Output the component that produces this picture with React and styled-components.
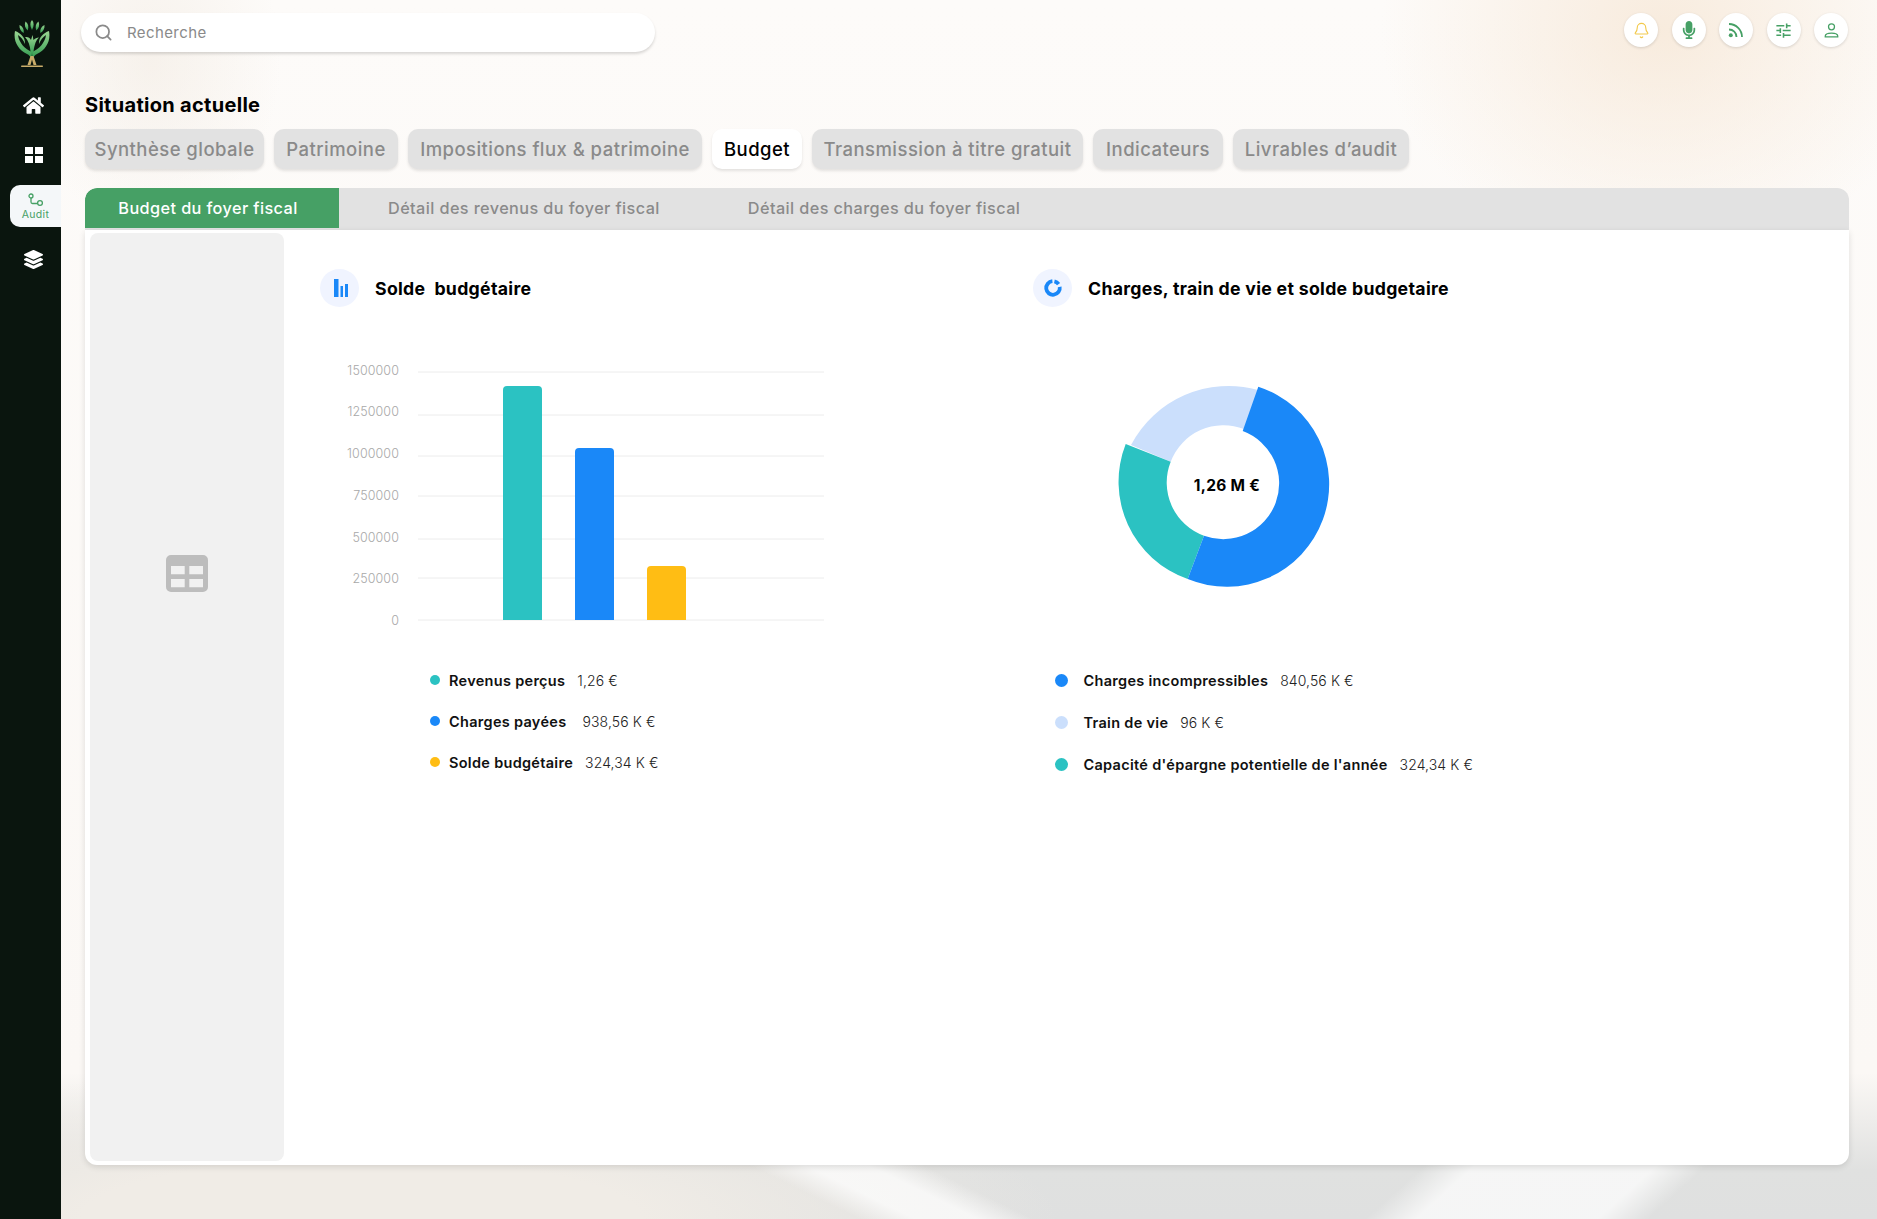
import React from 'react'
import styled, { createGlobalStyle } from 'styled-components'
import { Bell, Search } from 'lucide-react'
import { FaHome, FaLayerGroup, FaMicrophone } from 'react-icons/fa'
import { MdTune } from 'react-icons/md'

const GlobalStyle = createGlobalStyle`
  html, body {
    margin: 0;
    padding: 0;
    font-family: Inter, "Noto Sans", sans-serif;
  }
  * { box-sizing: border-box; }
`

const topTabs = [
  { label: 'Synthèse globale', width: 179 },
  { label: 'Patrimoine', width: 124 },
  { label: 'Impositions flux & patrimoine', width: 294 },
  { label: 'Budget', width: 90, active: true },
  { label: 'Transmission à titre gratuit', width: 271 },
  { label: 'Indicateurs', width: 130 },
  { label: 'Livrables d’audit', width: 176 },
]

const yTicks = [
  { label: '1500000', y: 12, labelY: 15.2 },
  { label: '1250000', y: 55, labelY: 56.2 },
  { label: '1000000', y: 96, labelY: 98.2 },
  { label: '750000', y: 136, labelY: 140.2 },
  { label: '500000', y: 179, labelY: 182.2 },
  { label: '250000', y: 218, labelY: 222.5 },
  { label: '0', y: 260, labelY: 264.5 },
]

const bars = [
  { x: 183, top: 26, color: '#2bc2c2' },
  { x: 255, top: 88, color: '#1a88f8' },
  { x: 327, top: 206, color: '#ffbd14' },
]

const barLegend = [
  { color: '#2bc2c2', name: 'Revenus perçus', value: '1,26 €' },
  { color: '#1a88f8', name: 'Charges payées', value: '\u00a0938,56 K €' },
  { color: '#ffbd14', name: 'Solde budgétaire', value: '324,34 K €' },
]

const donutLegend = [
  { color: '#1a88f8', name: 'Charges incompressibles', value: '840,56 K €' },
  { color: '#cbdffc', name: 'Train de vie', value: '96 K €' },
  { color: '#2bc2c2', name: "Capacité d'épargne potentielle de l'année", value: '324,34 K €' },
]

const Logo = () => (
  <svg width="36" height="48" viewBox="0 0 36 48">
    <defs>
      <linearGradient id="leaf" x1="0" y1="0" x2="0" y2="1">
        <stop offset="0" stopColor="#9ad592" />
        <stop offset="1" stopColor="#2f9a4f" />
      </linearGradient>
    </defs>
    <g fill="url(#leaf)">
      <path d="M1 11C-1 21 4 30 13 34c2 1 3.500 2.500 4.500 5l.5-7C11 29 5 23 4 15c3 2 5.500 5 7 9 .5-6-4-11-10-13z" />
      <path d="M35 11c2 10-3 19-12 23-2 1-3.500 2.500-4.500 5l-.5-7c7-3 13-9 14-17-3 2-5.500 5-7 9-.5-6 4-11 10-13z" />
      <path d="M18 0c2.200 2.500 2.200 6 0 10-2.200-4-2.200-7.500 0-10z" />
      <path d="M11.500 1.500c2.800 2 3.500 5 2.200 9-2.800-2.500-3.500-5.500-2.200-9z" />
      <path d="M24.500 1.500c-2.800 2-3.500 5-2.200 9 2.800-2.500 3.500-5.500 2.200-9z" />
      <path d="M5.500 5c3 1.200 4.600 4 4.300 8-3-1.500-4.600-4.200-4.300-8z" />
      <path d="M30.500 5c-3 1.200-4.600 4-4.300 8 3-1.500 4.600-4.200 4.300-8z" />
      <path d="M11 17c2.500-.5 5 .5 6 3l1.500-5 1 5c1.500-1.500 3.300-2.500 5.500-2.500-3 2.500-4.500 7-5.500 14l-1.500 4-1.500-4c-.5-6-2-10.500-5.500-14.500z" />
    </g>
    <path d="M16.500 36 13.500 45h3L18 39.500 19.500 45h3l-3-9z" fill="#c9ad6a" />
    <rect x="7" y="45.500" width="22" height="1.500" rx=".7" fill="#c9ad6a" />
  </svg>
)

const GridIcon = () => (
  <svg width="18" height="16" viewBox="0 0 18 16" fill="#fff">
    <rect x="0" y="0" width="8" height="7" />
    <rect x="10" y="0" width="8" height="7" />
    <rect x="0" y="9" width="8" height="7" />
    <rect x="10" y="9" width="8" height="7" />
  </svg>
)

const AuditIcon = () => (
  <svg width="16" height="15" viewBox="0 0 16 15" fill="none" stroke="#46a065" strokeWidth="1.3">
    <circle cx="3" cy="3" r="2" />
    <circle cx="12" cy="10" r="2.4" />
    <path d="M3 5v4c0 1 .6 1.500 1.500 1.500H9.500" />
  </svg>
)

const RssIcon = () => (
  <svg width="16" height="16" viewBox="0 0 16 16" fill="none" stroke="#46a065" strokeWidth="1.8">
    <path d="M1 2a13 13 0 0 1 13 13" />
    <path d="M1 7.500a7.500 7.500 0 0 1 7.500 7.500" />
    <circle cx="2.800" cy="13.200" r="2" fill="#46a065" stroke="none" />
  </svg>
)

const UserIcon = () => (
  <svg width="15" height="15" viewBox="0 0 18 18" fill="none" stroke="#46a065" strokeWidth="1.5">
    <circle cx="9" cy="4.500" r="3.600" />
    <path d="M1.500 16.500v-.8c0-2.200 3.400-3.700 7.500-3.700s7.500 1.500 7.500 3.700v.8z" />
  </svg>
)

const TableIcon = () => (
  <svg width="42" height="37" viewBox="0 0 42 37">
    <path
      fillRule="evenodd"
      fill="#bdbdbd"
      d="M5 0h32a5 5 0 0 1 5 5v27a5 5 0 0 1-5 5H5a5 5 0 0 1-5-5V5a5 5 0 0 1 5-5zM5 11v8.300h13.700V11zM23.300 11v8.300H37V11zM5 24v8.300h13.700V24zM23.300 24v8.300H37V24z"
    />
  </svg>
)

const BarsIcon = () => (
  <svg width="18" height="18" viewBox="-3 0 18 18" fill="#1a88f8">
    <rect x="0" y="0" width="4.500" height="18" />
    <rect x="6.500" y="7" width="2.500" height="11" />
    <rect x="11" y="5" width="3" height="13" />
  </svg>
)

const RingIcon = () => (
  <svg width="20" height="20" viewBox="0 0 20 20" fill="none" stroke="#1a88f8" strokeWidth="3.8">
    <path d="M16.700 8.800A6.800 6.800 0 1 1 9.400 3.200" />
    <path d="M11.400 3.350A6.800 6.800 0 0 1 15.600 6.100" />
  </svg>
)

const BarChart = () => (
  <ChartSvg width="510" height="275" viewBox="0 0 510 275">
    {yTicks.map((tick) => (
      <g key={tick.label}>
        <TickLine x1="98" x2="504" y1={tick.y} y2={tick.y} />
        <TickLabel x="79" y={tick.labelY}>{tick.label}</TickLabel>
      </g>
    ))}
    {bars.map((bar) => (
      <path
        key={bar.x}
        fill={bar.color}
        d={`M${bar.x} 260V${bar.top + 4}a4 4 0 0 1 4-4h31a4 4 0 0 1 4 4V260z`}
      />
    ))}
  </ChartSvg>
)

const DonutChart = () => (
  <ChartSvg width="260" height="240" viewBox="0 0 260 240">
    <path
      fill="#cbdffc"
      d="M41 85A110 110 0 0 1 168 30L154 69A56.500 56.500 0 0 0 80.700 101.700z"
    />
    <path
      fill="#2bc2c2"
      d="M97.700 219A103 103 0 0 1 35.700 84L80.700 101.700A56.500 56.500 0 0 0 114 175.700z"
    />
    <path
      fill="#1a88f8"
      d="M168.300 26.700A102.500 102.500 0 1 1 97.700 219L114 175.700A50 50 0 0 0 152.700 71z"
    />
    <DonutLabel x="137" y="131">1,26 M €</DonutLabel>
  </ChartSvg>
)

const Legend = ({ items, variant }) => (
  <LegendList $variant={variant}>
    {items.map((item) => (
      <LegendRow key={item.name} $variant={variant}>
        <LegendDot $color={item.color} $variant={variant} />
        <LegendName>{item.name}</LegendName>
        <LegendValue>{item.value}</LegendValue>
      </LegendRow>
    ))}
  </LegendList>
)

const App = () => {
  return (
    <>
      <GlobalStyle />
      <Page>
        <Sidebar>
          <LogoSlot><Logo /></LogoSlot>
          <NavButton><FaHome size={21} color="#fff" /></NavButton>
          <NavButton><GridIcon /></NavButton>
          <AuditItem>
            <AuditIcon />
            <AuditLabel>Audit</AuditLabel>
          </AuditItem>
          <NavButton><FaLayerGroup size={19} color="#fff" /></NavButton>
        </Sidebar>
        <Main>
          <TopBar>
            <SearchBox>
              <Search size={19} color="#8a8a8a" strokeWidth={2.2} />
              <SearchText>Recherche</SearchText>
            </SearchBox>
            <Actions>
              <RoundButton><Bell size={17} color="#f2c94c" strokeWidth={1.6} /></RoundButton>
              <RoundButton><FaMicrophone size={18} color="#46a065" /></RoundButton>
              <RoundButton><RssIcon /></RoundButton>
              <RoundButton><MdTune size={19} color="#46a065" /></RoundButton>
              <RoundButton><UserIcon /></RoundButton>
            </Actions>
          </TopBar>

          <PageTitle>Situation actuelle</PageTitle>

          <TabRow>
            {topTabs.map((tab) => (
              <TopTab key={tab.label} $active={tab.active} $width={tab.width}>{tab.label}</TopTab>
            ))}
          </TabRow>

          <SubTabs>
            <SubTab $active>Budget du foyer fiscal</SubTab>
            <SubTab>Détail des revenus du foyer fiscal</SubTab>
            <SubTab>Détail des charges du foyer fiscal</SubTab>
          </SubTabs>

          <Card>
            <SidePanel><TableIcon /></SidePanel>
            <Charts>
              <Column>
                <ChartHead>
                  <HeadIcon><BarsIcon /></HeadIcon>
                  <HeadTitle>Solde&nbsp; budgétaire</HeadTitle>
                </ChartHead>
                <ChartArea $variant="bars"><BarChart /></ChartArea>
                <Legend items={barLegend} variant="bars" />
              </Column>
              <Column>
                <ChartHead>
                  <HeadIcon><RingIcon /></HeadIcon>
                  <HeadTitle>Charges, train de vie et solde budgetaire</HeadTitle>
                </ChartHead>
                <ChartArea $variant="donut"><DonutChart /></ChartArea>
                <Legend items={donutLegend} variant="donut" />
              </Column>
            </Charts>
          </Card>
        </Main>
      </Page>
    </>
  )
}

const Page = styled.div`
  display: flex;
  width: 100%;
  height: 1219px;
  overflow: hidden;
`

const Sidebar = styled.nav`
  width: 61px;
  flex-shrink: 0;
  background-color: #0a150e;
  display: flex;
  flex-direction: column;
  align-items: flex-end;
`

const LogoSlot = styled.div`
  width: 61px;
  height: 84px;
  padding: 20px 0 0 14px;
`

const NavButton = styled.div`
  width: 61px;
  height: 30px;
  margin: 6px 0 14px;
  padding-left: 6px;
  display: flex;
  align-items: center;
  justify-content: center;
`

const AuditItem = styled.div`
  width: 51px;
  height: 42px;
  margin: 1px 0 11px;
  padding-top: 8px;
  background-color: #f4f7f9;
  border-radius: 10px 0 0 10px;
  display: flex;
  flex-direction: column;
  align-items: center;
`

const AuditLabel = styled.span`
  font-size: 10.5px;
  line-height: 12px;
  margin-top: 1px;
  color: #46a065;
  letter-spacing: 0.3px;
`

const Main = styled.main`
  flex: 1;
  min-width: 0;
  padding: 13px 28px 0 24px;
  background:
    linear-gradient(26deg, transparent 36%, rgba(255, 255, 255, 0.7) 45%, rgba(255, 255, 255, 0.7) 55%, transparent 64%) 574px bottom / 500px 60px no-repeat,
    linear-gradient(138deg, transparent 25%, rgba(255, 255, 255, 0.7) 34%, rgba(255, 255, 255, 0.7) 66%, transparent 75%) 1229px bottom / 500px 60px no-repeat,
    radial-gradient(ellipse 700px 150px at 300px 100%, #f0ece6 40%, transparent),
    radial-gradient(ellipse 280px 230px at 1600px 30px, rgba(246, 230, 212, 0.75), transparent),
    radial-gradient(ellipse 130px 170px at 90px 60px, rgba(240, 232, 222, 0.5), transparent),
    linear-gradient(to bottom, #fdfbf9 0, #fbf8f5 88%, #e0e1e0 96%, #dfe0e0 100%);
`

const TopBar = styled.header`
  display: flex;
  align-items: flex-start;
  justify-content: space-between;
  margin: 0 1px 0 -4px;
`

const SearchBox = styled.div`
  width: 574px;
  height: 39px;
  padding-left: 13px;
  background-color: #fff;
  border-radius: 20px;
  box-shadow: 0 2px 3px rgba(0, 0, 0, 0.15);
  display: flex;
  align-items: center;
  gap: 14px;
`

const SearchText = styled.span`
  font-size: 15px;
  color: #8a8a8a;
  letter-spacing: 0.4px;
`

const Actions = styled.div`
  display: flex;
  gap: 13.5px;
`

const RoundButton = styled.div`
  width: 34px;
  height: 34px;
  background-color: #fff;
  border-radius: 50%;
  box-shadow: 0 1px 3px rgba(0, 0, 0, 0.14);
  display: flex;
  align-items: center;
  justify-content: center;
`

const PageTitle = styled.h1`
  margin: 41px 0 12px;
  font-size: 20px;
  line-height: 24px;
  font-weight: 700;
  color: #000;
  letter-spacing: 0.3px;
`

const TabRow = styled.div`
  display: flex;
  gap: 10px;
`

const TopTab = styled.button`
  width: ${(p) => p.$width}px;
  height: 40px;
  padding: 0;
  border: 0;
  border-radius: 10px;
  font-family: inherit;
  font-size: 18.5px;
  font-weight: 500;
  letter-spacing: 0.45px;
  white-space: nowrap;
  color: ${(p) => (p.$active ? '#000' : '#8a8a8a')};
  background-color: ${(p) => (p.$active ? '#fff' : '#e2e2e2')};
  box-shadow: 0 2px 3px rgba(0, 0, 0, 0.1);
`

const SubTabs = styled.div`
  margin-top: 19px;
  height: 42px;
  display: flex;
  align-items: flex-start;
  background-color: #e2e2e2;
  border-radius: 12px 12px 0 0;
  overflow: hidden;
`

const SubTab = styled.div`
  height: 40px;
  width: ${(p) => (p.$active ? '254px' : 'auto')};
  padding: ${(p) => (p.$active ? '0 8px 0 0' : '0 44px')};
  margin-right: ${(p) => (p.$active ? '5px' : '0')};
  font-size: 16.25px;
  font-weight: 500;
  letter-spacing: 0.4px;
  color: ${(p) => (p.$active ? '#fff' : '#8a8a8a')};
  background-color: ${(p) => (p.$active ? '#46a065' : 'transparent')};
  border-radius: ${(p) => (p.$active ? '12px 0 0 0' : '0')};
  display: flex;
  align-items: center;
  justify-content: center;
`

const Card = styled.section`
  height: 935px;
  padding: 3px 4px 4px 5px;
  display: flex;
  background-color: #fff;
  border-radius: 0 0 12px 12px;
  box-shadow: 0 2px 6px rgba(0, 0, 0, 0.12);
`

const SidePanel = styled.aside`
  width: 194px;
  flex-shrink: 0;
  padding-bottom: 248px;
  background-color: #f1f1f1;
  border-radius: 8px;
  display: flex;
  align-items: center;
  justify-content: center;
`

const Charts = styled.div`
  flex: 1;
  padding: 36px 0 0 36px;
  display: grid;
  grid-template-columns: 713px 1fr;
`

const Column = styled.div`
  display: flex;
  flex-direction: column;
`

const ChartHead = styled.div`
  display: flex;
  align-items: center;
  gap: 16px;
`

const HeadIcon = styled.div`
  width: 39px;
  height: 38px;
  background-color: #f0f4ff;
  border-radius: 50%;
  display: flex;
  align-items: center;
  justify-content: center;
`

const HeadTitle = styled.h2`
  margin: 0;
  font-size: 17.7px;
  font-weight: 700;
  color: #000;
  letter-spacing: 0.3px;
`

const ChartArea = styled.div`
  margin-top: 53px;
  margin-left: ${(p) => (p.$variant === 'donut' ? '57px' : '0')};
`

const ChartSvg = styled.svg`
  display: block;
`

const TickLine = styled.line`
  stroke: #ececec;
  stroke-width: 1;
`

const TickLabel = styled.text`
  font-size: 12.5px;
  font-weight: 300;
  fill: #a8a8a8;
  text-anchor: end;
  letter-spacing: 0.1px;
`

const DonutLabel = styled.text`
  font-size: 15.5px;
  font-weight: 700;
  fill: #000;
  text-anchor: middle;
  letter-spacing: 0.3px;
`

const LegendList = styled.div`
  display: flex;
  flex-direction: column;
  gap: ${(p) => (p.$variant === 'donut' ? '22px' : '21px')};
  margin-top: ${(p) => (p.$variant === 'donut' ? '70px' : '35px')};
  margin-left: ${(p) => (p.$variant === 'donut' ? '22px' : '110px')};
`

const LegendRow = styled.div`
  height: 20px;
  display: flex;
  align-items: center;
  gap: 12px;
  font-size: 14.5px;
`

const LegendDot = styled.span`
  width: ${(p) => (p.$variant === 'donut' ? '13px' : '10px')};
  height: ${(p) => (p.$variant === 'donut' ? '13px' : '10px')};
  margin-right: ${(p) => (p.$variant === 'donut' ? '3.5px' : '-3px')};
  background-color: ${(p) => p.$color};
  border-radius: 50%;
`

const LegendName = styled.span`
  font-weight: 600;
  color: #111;
  letter-spacing: 0.3px;
`

const LegendValue = styled.span`
  font-size: 14px;
  font-weight: 300;
  color: #222;
  letter-spacing: 0.1px;
`

export default App
